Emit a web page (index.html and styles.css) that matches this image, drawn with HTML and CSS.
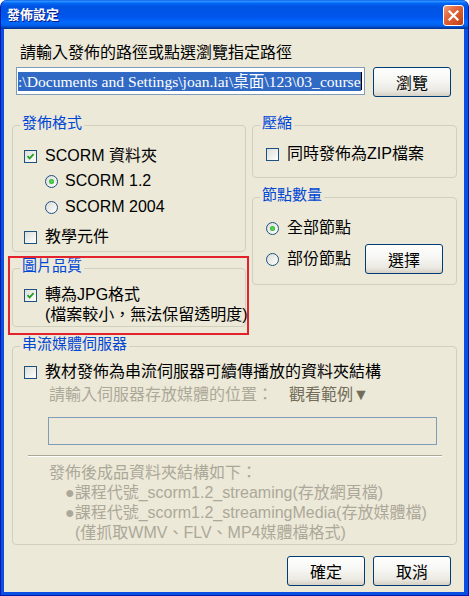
FILE: index.html
```html
<!DOCTYPE html>
<html lang="zh-Hant">
<head>
  <meta charset="UTF-8">
  <title>發佈設定</title>
  <link rel="stylesheet" href="styles.css">
</head>
<body>
  <div class="window">
    <div class="titlebar">
      <span class="title">發佈設定</span>
      <span class="close-btn">
        <svg width="11" height="11" viewBox="0 0 11 11"><path d="M1.5 1.5 L9.5 9.5 M9.5 1.5 L1.5 9.5" stroke="#fff" stroke-width="2.2" stroke-linecap="square"/></svg>
      </span>
    </div>

    <div class="client">
      <div class="path-label">請輸入發佈的路徑或點選瀏覽指定路徑</div>
      <div class="path-row">
        <div class="path-field"><span class="selected">:\Documents and Settings\joan.lai\桌面\123\03_course</span><span class="caret"></span></div>
        <button class="xp-button">瀏覽</button>
      </div>

      <div class="columns">
        <div class="col-left">
          <fieldset class="group group-format">
            <legend>發佈格式</legend>
            <div class="opt"><span class="check"><svg width="9" height="9" viewBox="0 0 9 9"><path d="M1.5 4.2 L3.6 6.4 L7.6 2.2" fill="none" stroke="#21a121" stroke-width="1.8"/></svg></span>SCORM 資料夾</div>
            <div class="opt sub r1"><span class="radio on"></span>SCORM 1.2</div>
            <div class="opt sub r2"><span class="radio"></span>SCORM 2004</div>
            <div class="opt r3"><span class="check"></span>教學元件</div>
          </fieldset>

          <div class="highlight-box">
            <fieldset class="group group-image">
              <legend>圖片品質</legend>
              <div class="opt top"><span class="check"><svg width="9" height="9" viewBox="0 0 9 9"><path d="M1.5 4.2 L3.6 6.4 L7.6 2.2" fill="none" stroke="#21a121" stroke-width="1.8"/></svg></span><span>轉為JPG格式<br>(檔案較小，無法保留透明度)</span></div>
            </fieldset>
          </div>
        </div>

        <div class="col-right">
          <fieldset class="group group-zip">
            <legend>壓縮</legend>
            <div class="opt"><span class="check"></span>同時發佈為ZIP檔案</div>
          </fieldset>

          <fieldset class="group group-nodes">
            <legend>節點數量</legend>
            <div class="opt"><span class="radio on"></span>全部節點</div>
            <div class="opt pick-row"><span class="radio"></span>部份節點<button class="xp-button pick">選擇</button></div>
          </fieldset>
        </div>
      </div>

      <fieldset class="group group-stream">
        <legend>串流媒體伺服器</legend>
        <div class="opt"><span class="check"></span>教材發佈為串流伺服器可續傳播放的資料夾結構</div>
        <div class="server-label muted">請輸入伺服器存放媒體的位置：<span class="example">觀看範例▼</span></div>
        <div class="server-field"></div>
        <div class="separator"></div>
        <div class="muted note">發佈後成品資料夾結構如下：</div>
        <div class="muted note bullet">●課程代號_scorm1.2_streaming(存放網頁檔)</div>
        <div class="muted note bullet">●課程代號_scorm1.2_streamingMedia(存放媒體檔)</div>
        <div class="muted note tail">(僅抓取WMV、FLV、MP4媒體檔格式)</div>
      </fieldset>

      <div class="dialog-buttons">
        <button class="xp-button">確定</button>
        <button class="xp-button">取消</button>
      </div>
    </div>
  </div>
</body>
</html>
```

FILE: styles.css
```css
/* 視窗外框 */
body {
  margin: 0;
  background: #fff;
  font-family: "Liberation Sans", "Noto Sans CJK TC", sans-serif;
  font-size: 16px;
  color: #000;
}

.window {
  width: 469px;
  height: 596px;
  box-sizing: border-box;
  display: flex;
  flex-direction: column;
  background: #0a4fe2;
  border: 1px solid #0019a8;
  border-top: none;
  border-radius: 7px 7px 0 0;
}

.titlebar {
  height: 29px;
  flex: none;
  display: flex;
  align-items: flex-start;
  justify-content: space-between;
  border-radius: 7px 7px 0 0;
  background: linear-gradient(#0058ee 0%, #3593ff 4%, #288eff 6%, #127dff 8%, #036ffc 10%, #0262ee 14%, #0057e5 20%, #0054e3 24%, #0055eb 56%, #005bf5 66%, #026afe 76%, #0062ef 86%, #0052d6 92%, #0040ab 96%, #003092 100%);
}

.title {
  margin: 5px 0 0 6px;
  font-size: 13px;
  line-height: 19px;
  font-weight: bold;
  color: #fff;
  text-shadow: 1px 1px #0a1883;
}

.close-btn {
  width: 21px;
  height: 21px;
  box-sizing: border-box;
  margin: 5px 4px 0 0;
  border: 1px solid #fff;
  border-radius: 3px;
  background: linear-gradient(135deg, #f0a07d 0%, #e2693f 35%, #cf4f24 75%, #b83b16 100%);
  display: flex;
  align-items: center;
  justify-content: center;
}

.client {
  flex: 1;
  margin: 0 4px 3px 3px;
  padding: 14px 7px 0 8px;
  background: #ece9d8;
}

/* 路徑 */
.path-label {
  margin-left: 8px;
  line-height: 20px;
}

.path-row {
  display: flex;
  align-items: flex-start;
  gap: 8px;
  margin: 4px 0 0 4px;
}

.path-field {
  width: 349px;
  height: 28px;
  box-sizing: border-box;
  border: 1px solid #7f9db9;
  background: #fff;
  padding: 1px 1px;
  display: flex;
  align-items: center;
  overflow: hidden;
  white-space: nowrap;
}

.selected {
  font-family: "Liberation Serif", "Noto Sans CJK TC", serif;
  font-size: 15.6px;
  line-height: 19px;
  background: #316ac5;
  color: #fff;
}

.caret {
  width: 0;
  height: 18px;
  border-left: 1px solid #000;
}

.xp-button {
  width: 78px;
  height: 30px;
  padding: 0;
  border: 1px solid #003c74;
  border-radius: 3px;
  background: linear-gradient(#ffffff 0%, #f6f6f3 45%, #ebe9e2 80%, #d6d0c5 100%);
  font-family: inherit;
  font-size: 16px;
  color: #000;
}

/* 群組框 */
.columns {
  display: flex;
  gap: 6px;
  margin-top: 18px;
}

.col-left {
  width: 234px;
}

.col-right {
  width: 205px;
}

.group {
  margin: 0;
  padding: 0 0 0 11px;
  min-inline-size: 0;
  border: 1px solid #d0d0bf;
  border-radius: 4px;
}

.group legend {
  margin-left: -4px;
  padding: 0 2px 4px;
  font-size: 15px;
  line-height: 16px;
  color: #0046d5;
}

.opt {
  display: flex;
  align-items: center;
  gap: 8px;
  line-height: 20px;
  white-space: nowrap;
}

.check {
  width: 13px;
  height: 13px;
  flex: none;
  box-sizing: border-box;
  border: 1px solid #1c5180;
  background: linear-gradient(135deg, #dcdcd7, #ffffff);
  display: flex;
  align-items: center;
  justify-content: center;
}

.radio {
  width: 13px;
  height: 13px;
  flex: none;
  box-sizing: border-box;
  border: 1px solid #1c5180;
  border-radius: 50%;
  background: linear-gradient(135deg, #dcdcd7, #ffffff);
  display: flex;
  align-items: center;
  justify-content: center;
}

.radio.on::after {
  content: "";
  width: 5px;
  height: 5px;
  border-radius: 50%;
  background: radial-gradient(#5ce05c, #21a121);
}

.group-format {
  padding-top: 11px;
  padding-bottom: 4px;
}

.group-format .sub {
  margin-left: 21px;
  gap: 7px;
}

.group-format .r1 { margin-top: 5px; }
.group-format .r2 { margin-top: 6px; }
.group-format .r3 { margin-top: 10px; }

/* 紅框標示 */
.highlight-box {
  margin: 4px -3px 0 -4px;
  padding: 0 1px 6px 2px;
  border: 2px solid #e3222c;
}

.group-image {
  padding-top: 7px;
  padding-bottom: 1px;
}

.group-image .opt {
  align-items: flex-start;
}

.group-image .check {
  margin-top: 4px;
}

.group-zip {
  padding: 9px 0 13px 13px;
}

.group-nodes {
  margin-top: 9px;
  padding: 11px 0 10px 13px;
}

.group-zip legend,
.group-nodes legend {
  margin-left: -6px;
}

.pick-row {
  margin-top: 6px;
}

.pick {
  margin-left: 6px;
}

/* 串流媒體 */
.group-stream {
  margin-top: 1px;
  padding-top: 6px;
  padding-bottom: 1px;
}

.muted {
  color: #aca899;
  line-height: 20px;
  white-space: nowrap;
}

.server-label {
  margin: 3px 0 0 25px;
}

.example {
  margin-left: 16px;
  color: #716d5a;
}

.server-field {
  width: 389px;
  height: 28px;
  box-sizing: border-box;
  margin: 12px 0 0 24px;
  border: 1px solid #7f9db9;
}

.separator {
  width: 414px;
  margin: 10px 0 0 4px;
  border-top: 1px solid #aca899;
  border-bottom: 1px solid #fff;
}

.note {
  margin-left: 25px;
}

.separator + .note {
  margin-top: 6px;
}

.bullet {
  margin-left: 41px;
}

.tail {
  margin-left: 51px;
}

.dialog-buttons {
  display: flex;
  justify-content: flex-end;
  gap: 8px;
  margin: 11px 6px 0 0;
}
```
